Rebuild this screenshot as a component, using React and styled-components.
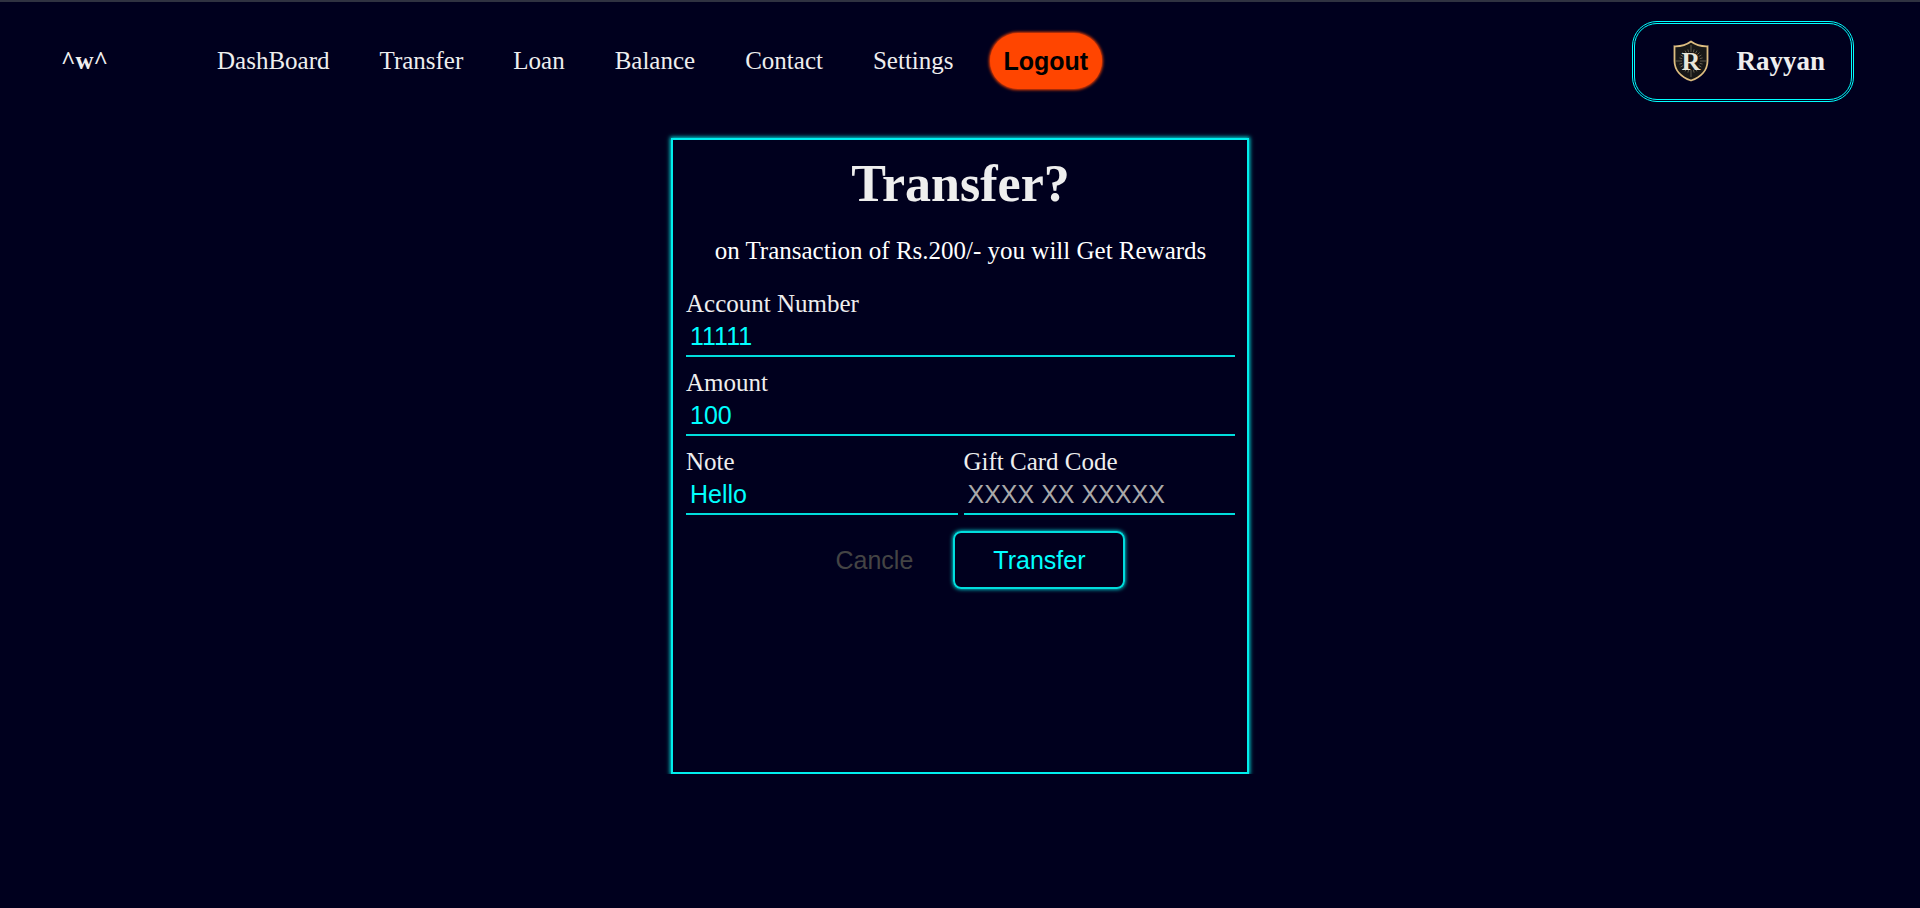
import React from "react";
import styled, { createGlobalStyle } from "styled-components";

const Global = createGlobalStyle`
  * { box-sizing: border-box; }
  body {
    margin: 0;
    background: #00001e;
    color: #fff;
    font-family: "Liberation Serif", "Times New Roman", serif;
    font-size: 25px;
    line-height: 28px;
  }
  input, button { font-family: "Liberation Sans", Arial, sans-serif; font-size: 25px; line-height: 28px; }
`;

const Page = styled.div`
  border-top: 2px solid #2f3241;
`;

const Header = styled.header`
  display: flex;
  align-items: center;
  height: 118px;
  padding: 0 66px 0 61px;
`;

const Brand = styled.span`
  width: 156px;
  font-weight: bold;
  color: #eee;
`;

const Nav = styled.nav`
  display: flex;
  align-items: center;
  gap: 50px;
  flex: 1;
`;

const NavLink = styled.a`
  color: #eee;
  text-decoration: none;
`;

const LogoutButton = styled.button`
  height: 56px;
  margin-left: -14px;
  padding: 0 14px;
  border: 0;
  border-radius: 28px;
  background: orangered;
  box-shadow: 0 0 3px 1px orangered;
  color: #000;
  font-weight: bold;
`;

const Profile = styled.div`
  display: flex;
  align-items: center;
  gap: 27px;
  height: 81px;
  padding: 0 26px 0 38px;
  border: 3px double #0ff;
  border-radius: 25px;
`;

const ProfileName = styled.span`
  color: #eee;
  font-size: 27px;
  font-weight: bold;
`;

const Card = styled.main`
  width: 578px;
  min-height: 636px;
  margin: 18px auto 0;
  padding: 14px 12px 14px 13px;
  border: 2px solid #0ee;
  box-shadow: 0 0 4px 1px #0dd;
`;

const Title = styled.h1`
  margin: 0;
  font-size: 52px;
  line-height: 60px;
  text-align: center;
  color: #eee;
`;

const Lead = styled.p`
  margin: 23px 0 25px;
  text-align: center;
`;

const Fields = styled.form`
  display: grid;
  grid-template-columns: 1fr 1fr;
  gap: 12px 6px;
`;

const Field = styled.div`
  grid-column: ${(p) => (p.$half ? "auto" : "1 / -1")};
  display: flex;
  flex-direction: column;
`;

const Label = styled.label`
  color: #eee;
`;

const Input = styled.input`
  width: 100%;
  height: 39px;
  padding: 0 4px;
  border: 0;
  border-bottom: 2px solid #0dd;
  outline: 0;
  background: transparent;
  color: #0ff;
  &::placeholder { color: #a9a9a9; opacity: 1; }
`;

const Actions = styled.div`
  grid-column: 1 / -1;
  display: flex;
  justify-content: center;
  margin-top: 4px;
`;

const ActionButton = styled.button`
  height: 58px;
  padding: 0 38px;
  border: 2px solid ${(p) => (p.$primary ? "#0dd" : "transparent")};
  border-radius: 8px;
  background: transparent;
  box-shadow: ${(p) => (p.$primary ? "0 0 4px #0ff" : "none")};
  color: ${(p) => (p.$primary ? "#0ff" : "#444")};
`;

const links = ["DashBoard", "Transfer", "Loan", "Balance", "Contact", "Settings"];

const fields = [
  { id: "account", label: "Account Number", value: "11111" },
  { id: "amount", label: "Amount", value: "100" },
  { id: "note", label: "Note", value: "Hello", half: true },
  { id: "gift", label: "Gift Card Code", placeholder: "XXXX XX XXXXX", half: true },
];

const rays = Array.from({ length: 24 }, (_, i) => i * 15);

function Shield() {
  return (
    <svg width="36" height="42" viewBox="0 0 36 42" aria-hidden="true">
      <path
        d="M18 1.500C13.500 4.800 7.500 6.500 1.500 6.300V21c0 9 6.500 16 16.500 19.500C28 37 34.500 30 34.500 21V6.300C28.500 6.500 22.500 4.800 18 1.500Z"
        fill="#171717"
        stroke="#dcbc80"
        strokeWidth="1.800"
      />
      <g stroke="#7d7460" strokeWidth="0.700">
        {rays.map((a) => (
          <line key={a} x1="18" y1={a % 90 === 0 ? 5 : 9} x2="18" y2="12" transform={`rotate(${a} 18 21)`} />
        ))}
      </g>
      <text x="18" y="30" textAnchor="middle" fontFamily="Liberation Serif, serif" fontWeight="bold" fontSize="26" fill="#e8e6da">
        R
      </text>
    </svg>
  );
}

export default function App() {
  return (
    <Page>
      <Global />
      <Header>
        <Brand>^w^</Brand>
        <Nav>
          {links.map((l) => (
            <NavLink key={l} href="#">{l}</NavLink>
          ))}
          <LogoutButton type="button">Logout</LogoutButton>
        </Nav>
        <Profile>
          <Shield />
          <ProfileName>Rayyan</ProfileName>
        </Profile>
      </Header>
      <Card>
        <Title>Transfer?</Title>
        <Lead>on Transaction of Rs.200/- you will Get Rewards</Lead>
        <Fields onSubmit={(e) => e.preventDefault()}>
          {fields.map((f) => (
            <Field key={f.id} $half={f.half}>
              <Label htmlFor={f.id}>{f.label}</Label>
              <Input id={f.id} type="text" defaultValue={f.value} placeholder={f.placeholder} />
            </Field>
          ))}
          <Actions>
            <ActionButton type="button">Cancle</ActionButton>
            <ActionButton type="submit" $primary>Transfer</ActionButton>
          </Actions>
        </Fields>
      </Card>
    </Page>
  );
}
